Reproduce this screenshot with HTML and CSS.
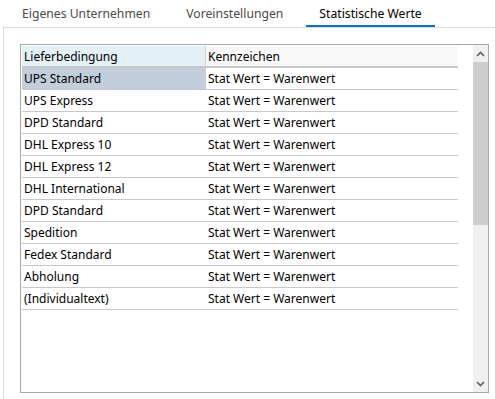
FILE: index.html
```html
<!DOCTYPE html>
<html>
<head>
<meta charset="utf-8">
<link rel="stylesheet" href="styles.css">
</head>
<body>
<div class="tabs">
  <div class="tab">Eigenes Unternehmen</div>
  <div class="tab">Voreinstellungen</div>
  <div class="tab active">Statistische Werte</div>
</div>
<div class="panel">
  <div class="listbox">
    <div class="grid">
      <div class="row head">
        <div class="c1">Lieferbedingung</div>
        <div class="c2">Kennzeichen</div>
      </div>
      <div class="row sel"><div class="c1">UPS Standard</div><div class="c2">Stat Wert = Warenwert</div></div>
      <div class="row"><div class="c1">UPS Express</div><div class="c2">Stat Wert = Warenwert</div></div>
      <div class="row"><div class="c1">DPD Standard</div><div class="c2">Stat Wert = Warenwert</div></div>
      <div class="row"><div class="c1">DHL Express 10</div><div class="c2">Stat Wert = Warenwert</div></div>
      <div class="row"><div class="c1">DHL Express 12</div><div class="c2">Stat Wert = Warenwert</div></div>
      <div class="row"><div class="c1">DHL International</div><div class="c2">Stat Wert = Warenwert</div></div>
      <div class="row"><div class="c1">DPD Standard</div><div class="c2">Stat Wert = Warenwert</div></div>
      <div class="row"><div class="c1">Spedition</div><div class="c2">Stat Wert = Warenwert</div></div>
      <div class="row"><div class="c1">Fedex Standard</div><div class="c2">Stat Wert = Warenwert</div></div>
      <div class="row"><div class="c1">Abholung</div><div class="c2">Stat Wert = Warenwert</div></div>
      <div class="row"><div class="c1">(Individualtext)</div><div class="c2">Stat Wert = Warenwert</div></div>
    </div>
    <div class="scrollbar">
      <div class="arrow">
        <svg width="9" height="6" viewBox="0 0 9 6"><path d="M1 5 L4.5 1.5 L8 5" fill="none" stroke="#606060" stroke-width="1.6"/></svg>
      </div>
      <div class="track"><div class="thumb"></div></div>
      <div class="arrow">
        <svg width="9" height="6" viewBox="0 0 9 6"><path d="M1 1 L4.5 4.5 L8 1" fill="none" stroke="#606060" stroke-width="1.6"/></svg>
      </div>
    </div>
  </div>
</div>
</body>
</html>
```
FILE: styles.css
```css
html, body {
  margin: 0;
  padding: 0;
  background: #ffffff;
}
body {
  font-family: "Noto Sans", "Open Sans", sans-serif;
  font-size: 12px;
  color: #000;
  width: 495px;
  height: 399px;
  overflow: hidden;
}
.tabs {
  display: flex;
  gap: 10px;
  padding-left: 9px;
  height: 27px;
}
.tab {
  padding: 4px 13px 0;
  height: 21px;
  font-size: 12.2px;
  line-height: 20px;
  color: #4a4a4a;
  border-bottom: 2px solid transparent;
}
.tab.active {
  color: #000;
  border-bottom-color: #0a72b8;
}
.panel {
  margin-left: 3px;
  border-top: 1px solid #dadada;
  border-left: 1px solid #dadada;
  padding: 16px 0 0 16px;
  height: 355px;
}
.listbox {
  width: 467px;
  height: 347px;
  border: 1px solid #a8a8a8;
  display: flex;
  justify-content: space-between;
  background: #fff;
}
.grid {
  width: 436px;
  padding: 1px 0 0 1px;
}
.row {
  display: flex;
  height: 21px;
  border-bottom: 1px solid #c8c8c8;
  line-height: 20px;
}
.row.head {
  height: 20px;
  line-height: 19px;
  border-bottom: 2px solid #c8c8c8;
  background: #f8f8f8;
}
.c1 {
  width: 182px;
  padding: 1px 0 0 2px;
  white-space: nowrap;
}
.head .c1 {
  background: #e3f0f6;
  border-right: 1px solid #cfd9de;
  width: 181px;
}
.c2 {
  flex: 1;
  padding: 1px 0 0 2px;
  white-space: nowrap;
}
.sel .c1 {
  background: #c2cedb;
}
.scrollbar {
  width: 15px;
  background: #f0f0f0;
  display: flex;
  flex-direction: column;
}
.arrow {
  height: 17px;
  display: flex;
  align-items: center;
  justify-content: center;
}
.track {
  flex: 1;
}
.thumb {
  height: 163px;
  background: #cdcdcd;
}
```
